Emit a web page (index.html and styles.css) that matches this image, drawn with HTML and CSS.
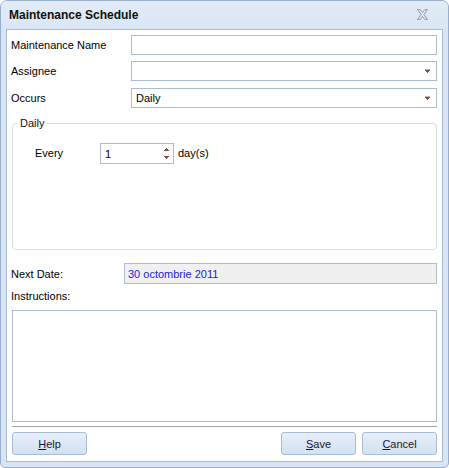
FILE: index.html
```html
<!DOCTYPE html>
<html>
<head>
<meta charset="utf-8">
<link rel="stylesheet" href="styles.css">
</head>
<body>
<div class="window">
  <div class="titlebar">
    <span class="title">Maintenance Schedule</span>
    <svg class="close" width="13" height="11" viewBox="0 0 13 11">
      <path d="M1.5 0.5 L4 0.5 L6.5 3.5 L9 0.5 L11.5 0.5 L8 5.5 L11.5 10.5 L9 10.5 L6.5 7.5 L4 10.5 L1.5 10.5 L5 5.5 Z" fill="none" stroke="#8d9ab3" stroke-width="1"/>
    </svg>
  </div>
  <div class="content">
    <div class="row r1">
      <span class="label">Maintenance Name</span>
      <div class="field"></div>
    </div>
    <div class="row r2">
      <span class="label">Assignee</span>
      <div class="field combo">
        <span class="value"></span>
        <svg class="arrow" width="5" height="4" viewBox="0 0 5 4"><rect x="0" y="0" width="5" height="1" fill="#c9b6ae"/><rect x="0" y="1" width="5" height="1" fill="#7a5248"/><rect x="1" y="2" width="3" height="1" fill="#7a5248"/><rect x="2" y="3" width="1" height="1" fill="#7a5248"/></svg>
      </div>
    </div>
    <div class="row r3">
      <span class="label">Occurs</span>
      <div class="field combo">
        <span class="value">Daily</span>
        <svg class="arrow" width="5" height="4" viewBox="0 0 5 4"><rect x="0" y="0" width="5" height="1" fill="#c9b6ae"/><rect x="0" y="1" width="5" height="1" fill="#7a5248"/><rect x="1" y="2" width="3" height="1" fill="#7a5248"/><rect x="2" y="3" width="1" height="1" fill="#7a5248"/></svg>
      </div>
    </div>
    <fieldset class="group">
      <legend>Daily</legend>
      <div class="group-body">
        <span class="every">Every</span>
        <div class="spin">
          <span class="value">1</span>
          <svg class="spin-arrows" width="5" height="13" viewBox="0 0 5 13"><rect x="2" y="1" width="1" height="1" fill="#7a5248"/><rect x="1" y="2" width="3" height="1" fill="#7a5248"/><rect x="0" y="3" width="5" height="1" fill="#7a5248"/><rect x="0" y="9" width="5" height="1" fill="#7a5248"/><rect x="1" y="10" width="3" height="1" fill="#7a5248"/><rect x="2" y="11" width="1" height="1" fill="#7a5248"/></svg>
        </div>
        <span class="unit">day(s)</span>
      </div>
    </fieldset>
    <div class="row rdate">
      <span class="label date-label">Next Date:</span>
      <div class="field readonly"><span class="value">30 octombrie 2011</span></div>
    </div>
    <div class="instr-label">Instructions:</div>
    <div class="textarea"></div>
    <div class="separator"></div>
    <div class="buttons">
      <button class="btn"><u>H</u>elp</button>
      <div class="spacer"></div>
      <button class="btn"><u>S</u>ave</button>
      <button class="btn"><u>C</u>ancel</button>
    </div>
  </div>
</div>
</body>
</html>
```
FILE: styles.css
```css
html, body {
  margin: 0;
  padding: 0;
  background: #ffffff;
}
body {
  font-family: "Liberation Sans", Arial, sans-serif;
  font-size: 11px;
  color: #000;
}
.window {
  width: 449px;
  height: 468px;
  box-sizing: border-box;
  border: 1px solid #98aecb;
  border-radius: 7px 7px 5px 5px;
  background: #d9e5f4;
  display: flex;
  flex-direction: column;
  padding: 0 5px 5px 5px;
}
.titlebar {
  height: 27px;
  display: flex;
  align-items: center;
  justify-content: space-between;
  background: linear-gradient(#e3ecf8, #dae6f5);
  margin: 0 -5px;
  padding: 0 19px 1px 8px;
  border-radius: 6px 6px 0 0;
}
.title {
  font-size: 12px;
  font-weight: bold;
  color: #111;
}
.close {
  display: block;
}
.content {
  flex: 1;
  background: #ffffff;
  border: 1px solid #a9bcd6;
  padding: 5px 5px 0 4px;
  display: flex;
  flex-direction: column;
}
.row {
  display: flex;
  align-items: center;
}
.label {
  width: 120px;
  flex: none;
}
.field {
  flex: 1;
  height: 20px;
  box-sizing: border-box;
  border: 1px solid #abbbd2;
  background: #fff;
  display: flex;
  align-items: center;
  padding: 0 4px;
}
.r2 { margin-top: 6px; }
.r3 { margin-top: 7px; }
.combo .value {
  flex: 1;
}
.combo .arrow {
  display: block;
  margin-right: 2px;
}
.group {
  margin: 9px 0 0 1px;
  padding: 0;
  border: 1px solid #d3dde8;
  border-radius: 4px;
  min-inline-size: 0;
}
.group legend {
  margin-left: 5px;
  padding: 0 2px;
  line-height: 13px;
  color: #111;
}
.group-body {
  height: 119px;
  box-sizing: border-box;
  padding: 13px 0 0 22px;
  display: flex;
  align-items: flex-start;
}
.every {
  width: 65px;
  line-height: 21px;
}
.spin {
  width: 74px;
  height: 21px;
  box-sizing: border-box;
  border: 1px solid #abbbd2;
  display: flex;
  align-items: center;
  padding: 0 4px 0 4px;
}
.spin .value { flex: 1; }
.spin-arrows { display: block; }
.unit {
  margin-left: 4px;
  line-height: 21px;
}
.rdate { margin-top: 13px; }
.date-label { width: 113px; }
.readonly {
  height: 21px;
  background: #f0f0f0;
  border-color: #aebdd3;
  padding-left: 3px;
}
.readonly .value { color: #1a1ae0; }
.instr-label {
  margin-top: 5px;
  line-height: 14px;
}
.textarea {
  margin: 7px 0 0 1px;
  height: 112px;
  box-sizing: border-box;
  border: 1px solid #abbbd2;
  background: #fff;
}
.separator {
  margin: 4px 0 0 1px;
  height: 1px;
  background: #a3a3a3;
}
.buttons {
  margin: 5px 0 0 1px;
  display: flex;
  gap: 6px;
}
.spacer { flex: 1; }
.btn {
  width: 75px;
  height: 23px;
  box-sizing: border-box;
  border: 1px solid #a9bbd3;
  border-radius: 3px;
  background: linear-gradient(#e7eff9, #d3e1f2);
  font-family: "Liberation Sans", Arial, sans-serif;
  font-size: 11px;
  color: #1b1b1b;
  padding: 0;
}
.btn u { color: #10105a; }
```
